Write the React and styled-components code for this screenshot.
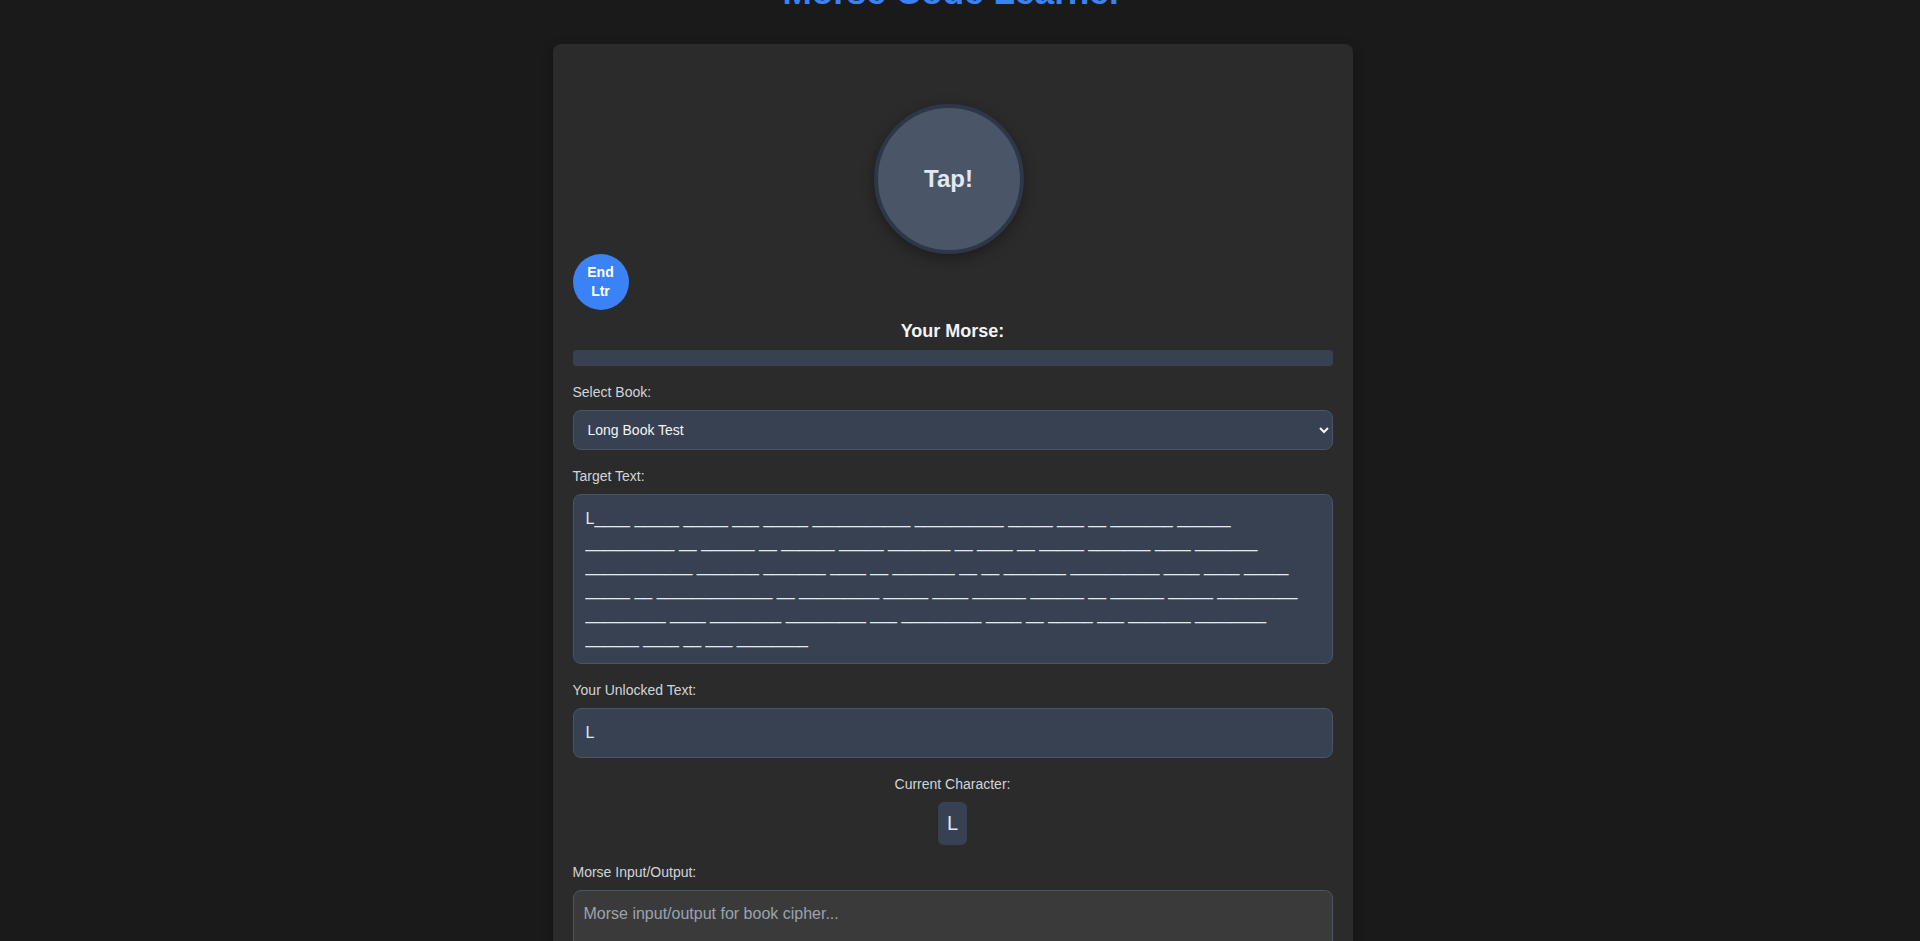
import React, { useLayoutEffect, useState } from "react";
import styled, { createGlobalStyle } from "styled-components";

const LOREM =
  "Lorem ipsum dolor sit amet, consectetur adipiscing elit, sed do eiusmod tempor incididunt ut labore et dolore magna aliqua. Ut enim ad minim veniam, quis nostrud exercitation ullamco laboris nisi ut aliquip ex ea commodo consequat. Duis aute irure dolor in reprehenderit in voluptate velit esse cillum dolore eu fugiat nulla pariatur. Excepteur sint occaecat cupidatat non proident, sunt in culpa qui officia deserunt mollit anim id est laborum.";

const BOOKS = [
  { id: "long", title: "Long Book Test", text: LOREM },
  { id: "short", title: "Short Book Test", text: "Hello world" },
];

// letters not yet unlocked are shown as underscores, spaces kept so words wrap
const maskText = (text, unlockedCount) =>
  text
    .split("")
    .map((c, i) => (i < unlockedCount ? c : c === " " ? " " : "_"))
    .join("");

export default function App() {
  const [bookId, setBookId] = useState("long");
  const [morse, setMorse] = useState("");
  const [io, setIo] = useState("");
  const book = BOOKS.find((b) => b.id === bookId) || BOOKS[0];
  const unlocked = book.text.slice(0, 1);
  const current = book.text.charAt(unlocked.length - 1);

  useLayoutEffect(() => {
    window.scrollTo(0, 104);
  }, []);

  return (
    <Page>
      <GlobalStyle />
      <Title>Morse Code Learner</Title>
      <Card>
        <TapArea>
          <TapButton type="button" onClick={() => setMorse((m) => m + ".")}>
            Tap!
          </TapButton>
          <EndButton type="button" onClick={() => setMorse("")}>
            End Ltr
          </EndButton>
        </TapArea>

        <MorseHeading>Your Morse:</MorseHeading>
        <MorseBar>{morse}</MorseBar>

        <Field>
          <Label htmlFor="book">Select Book:</Label>
          <Select id="book" value={bookId} onChange={(e) => setBookId(e.target.value)}>
            {BOOKS.map((b) => (
              <option key={b.id} value={b.id}>
                {b.title}
              </option>
            ))}
          </Select>
        </Field>

        <Field>
          <Label>Target Text:</Label>
          <TextBox>{maskText(book.text, unlocked.length)}</TextBox>
        </Field>

        <Field>
          <Label>Your Unlocked Text:</Label>
          <TextBox>{unlocked}</TextBox>
        </Field>

        <Field $center>
          <Label>Current Character:</Label>
          <CharBox>{current}</CharBox>
        </Field>

        <Field>
          <Label htmlFor="io">Morse Input/Output:</Label>
          <TextArea
            id="io"
            value={io}
            onChange={(e) => setIo(e.target.value)}
            placeholder="Morse input/output for book cipher..."
          />
        </Field>

        <ButtonRow>
          <ActionButton type="button">Play Morse</ActionButton>
          <ActionButton type="button" $ghost onClick={() => setIo("")}>
            Clear
          </ActionButton>
        </ButtonRow>
      </Card>
    </Page>
  );
}

const GlobalStyle = createGlobalStyle`
  html, body {
    margin: 0;
    padding: 0;
    background: #1a1a1a;
    scroll-behavior: auto;
  }
  body {
    font-family: "Liberation Sans", Arial, sans-serif;
    color: #e5e7eb;
  }
  * {
    box-sizing: border-box;
  }
`;

const Page = styled.div`
  padding: 20px 35px 38px 20px;
  display: flex;
  flex-direction: column;
  align-items: center;
`;

const Title = styled.h1`
  margin: 56px 0 32px;
  font-size: 35.2px;
  line-height: 40px;
  font-weight: 700;
  color: #3b82f6;
  text-align: center;
`;

const Card = styled.div`
  width: 100%;
  max-width: 800px;
  padding: 20px;
  background: #2b2b2b;
  border-radius: 8px;
  box-shadow: 0 4px 12px rgba(0, 0, 0, 0.3);
  display: flex;
  flex-direction: column;
`;

const TapArea = styled.div`
  padding-top: 40px;
  display: flex;
  flex-direction: column;
`;

const TapButton = styled.button`
  align-self: center;
  margin-right: 8px;
  width: 150px;
  height: 150px;
  border-radius: 50%;
  border: 4px solid #2d3748;
  background: #4a5568;
  color: #e2e8f0;
  font-family: inherit;
  font-size: 24px;
  font-weight: 700;
  box-shadow: 0 4px 14px rgba(0, 0, 0, 0.35);
  cursor: pointer;
`;

const EndButton = styled.button`
  align-self: flex-start;
  width: 56px;
  height: 56px;
  padding: 0 8px;
  border-radius: 50%;
  border: none;
  background: #3b82f6;
  color: #ffffff;
  font-family: inherit;
  font-size: 14px;
  line-height: 19px;
  font-weight: 700;
  cursor: pointer;
`;

const MorseHeading = styled.h3`
  margin: 11px 0 8px;
  font-size: 18px;
  line-height: 21px;
  font-weight: 700;
  color: #f3f4f6;
  text-align: center;
`;

const MorseBar = styled.div`
  min-height: 16px;
  border-radius: 4px;
  background: #374151;
  font-family: "Liberation Mono", monospace;
  color: #e2e8f0;
  text-align: center;
`;

const Field = styled.div`
  margin-top: 18px;
  display: flex;
  flex-direction: column;
  align-items: ${({ $center }) => ($center ? "center" : "stretch")};
`;

const Label = styled.label`
  display: block;
  margin-bottom: 10px;
  font-size: 14px;
  line-height: 16px;
  color: #d1d5db;
`;

const Select = styled.select`
  height: 40px;
  padding: 0 10px;
  border-radius: 8px;
  border: 1px solid #4b5563;
  background: #374151;
  color: #f3f4f6;
  font-family: inherit;
  font-size: 14px;
  outline: none;
`;

const TextBox = styled.div`
  min-height: 50px;
  padding: 12px;
  border-radius: 8px;
  border: 1px solid #4b5563;
  background: #374151;
  color: #e2e8f0;
  font-size: 16px;
  line-height: 24px;
  word-wrap: break-word;
`;

const CharBox = styled.div`
  margin-bottom: 1px;
  padding: 10px 9px;
  border-radius: 6px;
  background: #374151;
  color: #e2e8f0;
  font-size: 20px;
  line-height: 23px;
`;

const TextArea = styled.textarea`
  height: 100px;
  padding: 13px 10px 10px;
  border-radius: 8px;
  border: 1px solid #4b5563;
  background: #3a3a3a;
  color: #e5e7eb;
  font-family: inherit;
  font-size: 16px;
  line-height: 20px;
  resize: vertical;
  outline: none;

  &::placeholder {
    color: #9ca3af;
  }
`;

const ButtonRow = styled.div`
  margin-top: 16px;
  display: flex;
  gap: 10px;
`;

const ActionButton = styled.button`
  flex: 1;
  height: 40px;
  border-radius: 8px;
  border: ${({ $ghost }) => ($ghost ? "1px solid #4b5563" : "none")};
  background: ${({ $ghost }) => ($ghost ? "transparent" : "#3b82f6")};
  color: #ffffff;
  font-family: inherit;
  font-size: 14px;
  font-weight: 600;
  cursor: pointer;
`;
